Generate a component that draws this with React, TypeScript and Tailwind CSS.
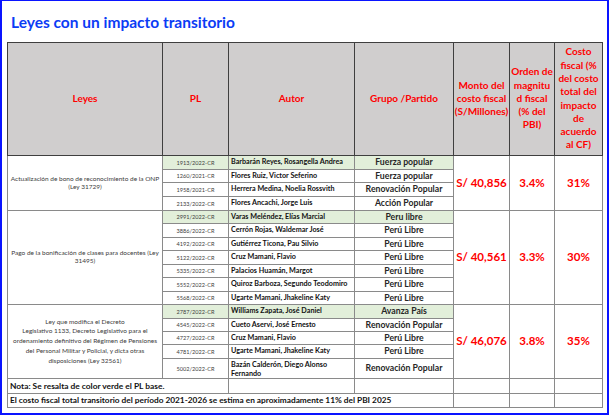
import React from "react";

type Row = { pl: string; autor: React.ReactNode; grupo: string; base?: boolean; h: string; tall?: boolean };
type Group = { ley: React.ReactNode; lh: string; monto: string; orden: string; costo: string; rows: Row[] };

const groups: Group[] = [
  {
    ley: (
      <>
        Actualización de bono de reconocimiento de la ONP
        <br />
        (Ley 31729)
      </>
    ),
    lh: "leading-[7.6px]",
    monto: "S/ 40,856",
    orden: "3.4%",
    costo: "31%",
    rows: [
      { pl: "1913/2022-CR", autor: "Barbarán Reyes, Rosangella Andrea", grupo: "Fuerza popular", base: true, h: "h-[14px]" },
      { pl: "1260/2021-CR", autor: "Flores Ruiz, Victor Seferino", grupo: "Fuerza popular", h: "h-[13.5px]" },
      { pl: "1958/2021-CR", autor: "Herrera Medina, Noelia Rossvith", grupo: "Renovación Popular", h: "h-[13.5px]" },
      { pl: "2133/2022-CR", autor: "Flores Ancachi, Jorge Luis", grupo: "Acción Popular", h: "h-[14px]" },
    ],
  },
  {
    ley: (
      <>
        Pago de la bonificación de clases para docentes (Ley
        <br />
        31495)
      </>
    ),
    lh: "leading-[7.6px]",
    monto: "S/ 40,561",
    orden: "3.3%",
    costo: "30%",
    rows: [
      { pl: "2991/2022-CR", autor: "Varas Meléndez, Elías Marcial", grupo: "Peru libre", base: true, h: "h-[13.5px]" },
      { pl: "3886/2022-CR", autor: "Cerrón Rojas, Waldemar José", grupo: "Perú Libre", h: "h-[13.5px]" },
      { pl: "4192/2022-CR", autor: "Gutiérrez Ticona, Pau Silvio", grupo: "Perú Libre", h: "h-[13.5px]" },
      { pl: "5122/2022-CR", autor: "Cruz Mamani, Flavio", grupo: "Perú Libre", h: "h-[13.5px]" },
      { pl: "5335/2022-CR", autor: "Palacios Huamán, Margot", grupo: "Perú Libre", h: "h-[13.5px]" },
      { pl: "5552/2022-CR", autor: "Quiroz Barboza, Segundo Teodomiro", grupo: "Perú Libre", h: "h-[13.5px]" },
      { pl: "5568/2022-CR", autor: "Ugarte Mamani, Jhakeline Katy", grupo: "Perú Libre", h: "h-[13px]" },
    ],
  },
  {
    ley: (
      <>
        Ley que modifica el Decreto
        <br />
        Legislativo 1133, Decreto Legislativo para el
        <br />
        ordenamiento definitivo del Régimen de Pensiones
        <br />
        del Personal Militar y Policial, y dicta otras
        <br />
        disposiciones (Ley 32561)
      </>
    ),
    lh: "leading-[9.8px]",
    monto: "S/ 46,076",
    orden: "3.8%",
    costo: "35%",
    rows: [
      { pl: "2787/2022-CR", autor: "Williams Zapata, José Daniel", grupo: "Avanza País", base: true, h: "h-[14px]" },
      { pl: "4545/2022-CR", autor: "Cueto Aservi, José Ernesto", grupo: "Renovación Popular", h: "h-[13px]" },
      { pl: "4727/2022-CR", autor: "Cruz Mamani, Flavio", grupo: "Perú Libre", h: "h-[13px]" },
      { pl: "4781/2022-CR", autor: "Ugarte Mamani, Jhakeline Katy", grupo: "Perú Libre", h: "h-[14px]" },
      {
        pl: "5002/2022-CR",
        autor: (
          <>
            Bazán Calderón, Diego Alonso
            <br />
            Fernando
          </>
        ),
        grupo: "Renovación Popular",
        h: "h-[19px]",
        tall: true,
      },
    ],
  },
];

const hd = "border border-[#3f3f3f] bg-[#d0cece] text-[#ff0000] font-bold text-[10px] leading-[13.3px] text-center align-middle p-0 whitespace-nowrap";
const bd = "border border-[#8a8a8a] p-0";

export default function App() {
  return (
    <div className="w-[609px] h-[417px] bg-white font-['Lato',sans-serif]">
      <div className="w-[609px] h-[415px] border-l-2 border-t border-r-2 border-b-2 border-[#0a14ff] pl-[5px]">
        <div className="h-[40.5px] pl-[4px] pt-[11px] text-[#0b3cf5] font-bold text-[15.5px] leading-[20px]">
          Leyes con un impacto transitorio
        </div>
        <table className="table-fixed border-collapse w-[595px] border border-[#6a6a6a]">
          <colgroup>
            <col className="w-[155px]" />
            <col className="w-[66px]" />
            <col className="w-[126px]" />
            <col className="w-[99px]" />
            <col className="w-[56px]" />
            <col className="w-[45px]" />
            <col className="w-[48px]" />
          </colgroup>
          <thead>
            <tr className="h-[113px]">
              <th className={hd}>Leyes</th>
              <th className={hd}>PL</th>
              <th className={hd}>Autor</th>
              <th className={hd}>Grupo /Partido</th>
              <th className={hd}>
                Monto del
                <br />
                costo fiscal
                <br />
                (S/Millones)
              </th>
              <th className={hd}>
                Orden de
                <br />
                magnitu
                <br />
                d fiscal
                <br />
                (% del
                <br />
                PBI)
              </th>
              <th className={hd}>
                Costo
                <br />
                fiscal (%
                <br />
                del costo
                <br />
                total del
                <br />
                impacto
                <br />
                de
                <br />
                acuerdo
                <br />
                al CF)
              </th>
            </tr>
          </thead>
          <tbody>
            {groups.map((g, gi) =>
              g.rows.map((r, ri) => (
                <tr key={`${gi}-${ri}`} className={r.h}>
                  {ri === 0 && (
                    <td
                      rowSpan={g.rows.length}
                      className={`${bd} text-center align-middle text-[#404040] text-[6.5px] ${g.lh} px-0 whitespace-nowrap`}
                    >
                      {g.ley}
                    </td>
                  )}
                  <td className={`${bd} text-center align-middle text-[#404040] text-[5.6px] leading-[7px] ${r.base ? "bg-[#e2efda]" : ""}`}>
                    {r.pl}
                  </td>
                  <td
                    className={`${bd} text-left ${r.tall ? "align-top pt-[1px] leading-[9px]" : "align-middle leading-[8px]"} text-[#111] font-bold text-[7.2px] pl-[2px] whitespace-nowrap overflow-hidden ${r.base ? "bg-[#e2efda]" : ""}`}
                  >
                    {r.autor}
                  </td>
                  <td className={`${bd} text-center align-middle text-[#262626] font-bold text-[8.7px] leading-[10px] whitespace-nowrap ${r.base ? "bg-[#e2efda]" : ""}`}>
                    {r.grupo}
                  </td>
                  {ri === 0 && (
                    <>
                      <td rowSpan={g.rows.length} className={`${bd} text-center align-middle text-[#ff0000] font-bold text-[11.5px] whitespace-nowrap`}>
                        {g.monto}
                      </td>
                      <td rowSpan={g.rows.length} className={`${bd} text-center align-middle text-[#ff0000] font-bold text-[11.5px]`}>
                        {g.orden}
                      </td>
                      <td rowSpan={g.rows.length} className={`${bd} text-center align-middle text-[#ff0000] font-bold text-[11.5px]`}>
                        {g.costo}
                      </td>
                    </>
                  )}
                </tr>
              ))
            )}
            <tr className="h-[15px]">
              <td colSpan={2} className={`${bd} text-left align-middle font-bold text-[8.4px] leading-[10px] text-[#111] pl-[2px] whitespace-nowrap`}>
                Nota: Se resalta de color verde el PL base.
              </td>
              <td className={bd}></td>
              <td className={bd}></td>
              <td className={bd}></td>
              <td className={bd}></td>
              <td className={bd}></td>
            </tr>
            <tr className="h-[14px]">
              <td colSpan={4} className={`${bd} text-left align-middle font-bold text-[8.3px] leading-[10px] text-[#111] pl-[2px] whitespace-nowrap`}>
                El costo fiscal total transitorio del período 2021-2026 se estima en aproximadamente 11% del PBI 2025
              </td>
              <td className={bd}></td>
              <td className={bd}></td>
              <td className={bd}></td>
            </tr>
          </tbody>
        </table>
      </div>
    </div>
  );
}
